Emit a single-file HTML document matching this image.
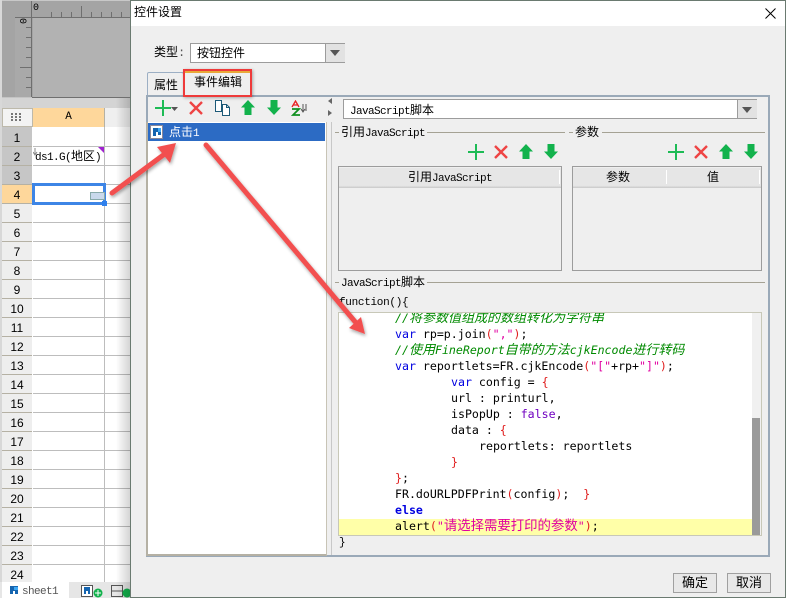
<!DOCTYPE html>
<html><head><meta charset="utf-8">
<style>
html,body{margin:0;padding:0}
body{width:787px;height:598px;position:relative;overflow:hidden;background:#fff;font-family:"Liberation Mono","WenQuanYi Zen Hei","Noto Sans CJK SC",monospace;font-size:12px;color:#000}
div,span.a,svg{position:absolute}
.t{white-space:nowrap;line-height:14px;font-size:12px}
.t i{font-style:normal;font-family:"Liberation Mono",monospace;font-size:11px;letter-spacing:-.6px}
.rn{left:2px;width:30px;height:18px;background:#eee;border-bottom:1px solid #b5b1a4;text-align:center;line-height:20px;font-size:12px;font-family:"Liberation Sans",sans-serif}
.c{left:0;white-space:pre;font-family:"DejaVu Sans Mono",monospace;font-size:11.6px;letter-spacing:-.01px;line-height:16px;height:16px;color:#000}
.c b{font-weight:normal}
.c .k,.c.k{color:#0000e0}.c.g{color:#008a00;font-style:italic}.c .p{color:#e02020}.c .s{color:#e000a0}.c .f{color:#7000c0}
.c u{text-decoration:none;font-family:"Noto Sans CJK SC",sans-serif;font-size:13.4px;line-height:1;letter-spacing:0}
.c.g u{font-size:13px}
.tb{background:#efefef;border:1px solid #9c9c9c;box-sizing:border-box}
.th{background:linear-gradient(#e6e6e6 0,#e6e6e6 88%,#c8c8c8 100%);text-align:center;line-height:20px;height:20px}
.btn{top:573px;width:44px;height:20px;background:#e8e8e8;border:1px solid #a0a0a0;box-sizing:border-box;text-align:center;line-height:19px;font-size:13px}
</style></head><body>
<svg width="0" height="0" style="left:0;top:0"><defs>
<symbol id="plus" viewBox="0 0 16 16"><path d="M8 0v16M0 8h16" stroke="#1dbb55" stroke-width="2"/></symbol>
<symbol id="x" viewBox="0 0 14 14"><path d="M1 1l12 12M13 1L1 13" stroke="#ee4444" stroke-width="2.400"/></symbol>
<symbol id="up" viewBox="0 0 14 15"><path d="M7 0l7 7.500h-3.500V15h-7V7.500H0z" fill="#12b24c"/></symbol>
<symbol id="dn" viewBox="0 0 14 15"><path d="M3.500 0h7v7.500H14L7 15 0 7.500h3.500z" fill="#12b24c"/></symbol>
<filter id="sh" x="-20%" y="-20%" width="140%" height="140%"><feDropShadow dx="1" dy="2" stdDeviation="1.500" flood-color="#000" flood-opacity=".35"/></filter>
</defs></svg>

<!-- Background sheet -->
<div style="left:0;top:0;width:2px;height:598px;background:#d8d8d8"></div>
<div style="left:2px;top:0;width:129px;height:98px;background:#a4a4a4"></div>
<div style="left:15px;top:18px;width:16px;height:79px;background:#a9a9a9"></div>
<div style="left:2px;top:0;width:129px;height:1px;background:#c8c8c8"></div>
<div style="left:33px;top:18px;width:98px;height:79px;background:#b2b2b2"></div>
<div style="left:2px;top:97px;width:129px;height:1px;background:#c4c4c4"></div>
<div style="left:2px;top:98px;width:129px;height:10px;background:#d4d4d4"></div>
<svg style="left:0;top:0" width="131" height="98"><path d="M31.500 1v96M15 17.500h116M32 97.500h99M51.500 12v5M61.500 12v5M71.500 12v5M81.500 6v11M91.500 12v5M101.500 12v5M111.500 12v5M121.500 12v5M26 27.500h5M26 37.500h5M26 47.500h5M26 57.500h5M20 67.500h11M26 77.500h5M26 87.500h5" stroke="#6f6f6f" fill="none"/></svg>
<div class="t" style="left:33px;top:2px;font-size:10px;font-family:'Liberation Mono',monospace">0</div>
<div class="t" style="left:18px;top:14px;font-size:10px;transform:rotate(90deg);font-family:'Liberation Mono',monospace">0</div>

<!-- Grid -->
<div style="left:2px;top:108px;width:31px;height:19px;background:#f3f3f3;border:1px solid #bdb9ab;box-sizing:border-box"></div>
<svg style="left:10px;top:112px" width="12" height="10"><path d="M1 1h2v2H1zM5 1h2v2H5zM9 1h2v2H9zM1 4h2v2H1zM5 4h2v2H5zM9 4h2v2H9zM1 7h2v2H1zM5 7h2v2H5zM9 7h2v2H9z" fill="#777"/></svg>
<div style="left:33px;top:108px;width:71px;height:19px;background:#fed79b;text-align:center;font-size:11px;line-height:19px;font-family:'Liberation Mono',monospace">A</div>
<div style="left:104px;top:108px;width:1px;height:19px;background:#b5b1a4"></div>
<div style="left:105px;top:108px;width:26px;height:19px;background:#efefef"></div>
<div style="left:33px;top:128px;width:98px;height:454px;background:#fff repeating-linear-gradient(to bottom,#fff 0,#fff 18px,#bdbdbd 18px,#bdbdbd 19px)"></div>
<div style="left:104px;top:127px;width:1px;height:455px;background:#bdbdbd"></div>
<div style="left:2px;top:127px;width:30px;height:1px;background:#c6c6c6"></div>
<div class="rn" style="top:128px;background:#c6c6c6">1</div>
<div class="rn" style="top:147px;background:#c6c6c6">2</div>
<div class="rn" style="top:166px;background:#c6c6c6">3</div>
<div class="rn" style="top:185px;background:#fed79b">4</div>
<div class="rn" style="top:204px">5</div><div class="rn" style="top:223px">6</div>
<div class="rn" style="top:242px">7</div><div class="rn" style="top:261px">8</div>
<div class="rn" style="top:280px">9</div><div class="rn" style="top:299px">10</div>
<div class="rn" style="top:318px">11</div><div class="rn" style="top:337px">12</div>
<div class="rn" style="top:356px">13</div><div class="rn" style="top:375px">14</div>
<div class="rn" style="top:394px">15</div><div class="rn" style="top:413px">16</div>
<div class="rn" style="top:432px">17</div><div class="rn" style="top:451px">18</div>
<div class="rn" style="top:470px">19</div><div class="rn" style="top:489px">20</div>
<div class="rn" style="top:508px">21</div><div class="rn" style="top:527px">22</div>
<div class="rn" style="top:546px">23</div><div class="rn" style="top:565px">24</div>
<div class="t" style="left:35px;top:150px;font-size:12px"><i>ds1.G(</i>地区<i>)</i></div>
<svg style="left:33px;top:147px" width="72" height="12"><path d="M2 1v6M0 5l2 3 2-3" stroke="#888" fill="none"/><path d="M65 0h6v6z" fill="#a020d0"/></svg>
<div style="left:32px;top:183px;width:74px;height:22px;box-sizing:border-box;border:3px solid #3d85e6;background:#fff"></div>
<div style="left:90px;top:192px;width:15px;height:8px;box-sizing:border-box;background:#c9d9ec;border:1px solid #8aa"></div>
<div style="left:102px;top:201px;width:5px;height:5px;background:#2f80ed"></div>

<!-- Bottom sheet bar -->
<div style="left:0;top:582px;width:131px;height:16px;background:#e6e6e6"></div>
<div style="left:2px;top:582px;width:67px;height:16px;background:#fff"></div>
<svg style="left:10px;top:586px" width="9" height="9"><path d="M0 0h8v8H5V5H3v3H0z" fill="#1565b0"/><path d="M4 1h4v3H4z" fill="#3fa9f5"/></svg>
<div class="t" style="left:22px;top:584px;color:#555"><i>sheet1</i></div>
<svg style="left:81px;top:585px" width="50" height="13"><rect x=".5" y=".5" width="11" height="11" fill="#fff" stroke="#555"/><path d="M3 2h6v7H7V6H5v3H3z" fill="#1565b0"/><circle cx="17" cy="8" r="4.500" fill="#12b24c"/><path d="M17 5v6M14 8h6" stroke="#fff"/><rect x="30.500" y=".5" width="11" height="11" fill="none" stroke="#555"/><path d="M30 6h12" stroke="#555"/><circle cx="46" cy="8" r="4.500" fill="#12b24c"/></svg>
<div style="left:116px;top:98px;width:15px;height:500px;background:linear-gradient(to right,rgba(0,0,0,0),rgba(0,0,0,.18))"></div>

<!-- Dialog -->
<div style="left:130px;top:0;width:656px;height:598px;background:#efefef;border:1px solid #6a7a70;box-sizing:border-box"></div>
<div style="left:131px;top:1px;width:654px;height:25px;background:#fff"></div>
<div class="t" style="left:134px;top:6px;font-size:12px">控件设置</div>
<svg style="left:765px;top:8px" width="11" height="11"><path d="M.5.500l10 10M10.500.500l-10 10" stroke="#000"/></svg>

<div class="t" style="left:154px;top:46px">类型<span style="color:#555">:</span></div>
<div style="left:190px;top:43px;width:155px;height:20px;background:#fff;border:1px solid #9c9c9c;box-sizing:border-box"></div>
<div style="left:325px;top:44px;width:19px;height:18px;background:#e2e2e2;border-left:1px solid #9c9c9c"></div>
<svg style="left:330px;top:50px" width="10" height="6"><path d="M0 0h10L5 6z" fill="#555"/></svg>
<div class="t" style="left:197px;top:47px">按钮控件</div>

<!-- Tabs -->
<div style="left:147px;top:72px;width:37px;height:24px;background:#efefef;border:1px solid #9cafc4;border-bottom:0;border-radius:2px 2px 0 0;box-sizing:border-box"></div>
<div class="t" style="left:154px;top:79px">属性</div>

<!-- Main panel -->
<div style="left:146px;top:95px;width:624px;height:462px;box-sizing:border-box;border:2px solid #9aa9b8;background:#efefef"></div>
<div style="left:184px;top:71px;width:66px;height:25px;background:#efefef"></div>
<div style="left:185px;top:71px;width:65px;height:2px;background:#e8a93a"></div>
<div class="t" style="left:194px;top:76px">事件编辑</div>
<div style="left:183px;top:69px;width:69px;height:28px;box-sizing:border-box;border:2px solid #ee3a3a;box-shadow:1px 1px 3px rgba(0,0,0,.3)"></div>

<!-- Left toolbar -->
<svg style="left:155px;top:100px" width="16" height="16"><use href="#plus"/></svg>
<svg style="left:171px;top:107px" width="7" height="4"><path d="M0 0h7L3.500 4z" fill="#555"/></svg>
<svg style="left:189px;top:101px" width="14" height="14"><use href="#x"/></svg>
<svg style="left:214px;top:100px" width="17" height="16"><path d="M1.500.500h6v11h-6zM8.500 4.500h4l3 3v8h-7z" fill="#fff" stroke="#1d5a78"/><path d="M12.500 4.500v3h3" fill="none" stroke="#1d5a78"/></svg>
<svg style="left:241px;top:100px" width="14" height="15"><use href="#up"/></svg>
<svg style="left:267px;top:100px" width="14" height="15"><use href="#dn"/></svg>
<svg style="left:291px;top:100px" width="18" height="16"><path d="M1 7L4.500 1 8 7M2.500 5h4" fill="none" stroke="#e82020" stroke-width="1.300"/><path d="M1 9h7L2 15h7" fill="none" stroke="#109020" stroke-width="1.800"/><path d="M12 4v7M10 9l2 3 2-3M15 4v7" fill="none" stroke="#555"/></svg>

<!-- Left list -->
<div style="left:146px;top:122px;width:181px;height:434px;background:#fff;border-left:2px solid #b5b1a4;border-right:1px solid #c8c4b6;border-bottom:2px solid #b5b1a4;box-sizing:border-box"></div>
<div style="left:148px;top:123px;width:177px;height:18px;background:#2c6bc4"></div>
<svg style="left:150px;top:125px" width="14" height="15"><path d="M.5.500h12v13H.500z" fill="#fff" stroke="#889"/><path d="M3 3h8v7H8V7H6v4H3z" fill="#1565b0"/><path d="M8 3h3v4H8z" fill="#3fa9f5"/></svg>
<div class="t" style="left:169px;top:126px;color:#fff">点击<i>1</i></div>

<!-- Splitter -->
<svg style="left:327px;top:95px" width="6" height="25"><path d="M5 3v6L1 6zM1 15v6l4-3z" fill="#666"/></svg>
<div style="left:331px;top:122px;width:1px;height:433px;background:#c8c8c8"></div>

<!-- Right top combo -->
<div style="left:343px;top:99px;width:414px;height:20px;background:#fff;border:1px solid #9c9c9c;box-sizing:border-box"></div>
<div style="left:737px;top:100px;width:19px;height:18px;background:#e2e2e2;border-left:1px solid #9c9c9c"></div>
<svg style="left:742px;top:107px" width="10" height="6"><path d="M0 0h10L5 6z" fill="#555"/></svg>
<div class="t" style="left:350px;top:104px"><i>JavaScript</i>脚本</div>

<!-- Legends -->
<div style="left:335px;top:132px;width:4px;height:1px;background:#a5a294"></div>
<div style="left:427px;top:132px;width:138px;height:1px;background:#a5a294"></div>
<div style="left:569px;top:132px;width:4px;height:1px;background:#a5a294"></div>
<div style="left:602px;top:132px;width:163px;height:1px;background:#a5a294"></div>
<div class="t" style="left:341px;top:126px">引用<i>JavaScript</i></div>
<div class="t" style="left:575px;top:126px">参数</div>

<svg style="left:468px;top:144px" width="16" height="16"><use href="#plus"/></svg>
<svg style="left:494px;top:145px" width="14" height="14"><use href="#x"/></svg>
<svg style="left:519px;top:144px" width="14" height="15"><use href="#up"/></svg>
<svg style="left:544px;top:144px" width="14" height="15"><use href="#dn"/></svg>
<svg style="left:668px;top:144px" width="16" height="16"><use href="#plus"/></svg>
<svg style="left:694px;top:145px" width="14" height="14"><use href="#x"/></svg>
<svg style="left:719px;top:144px" width="14" height="15"><use href="#up"/></svg>
<svg style="left:744px;top:144px" width="14" height="15"><use href="#dn"/></svg>

<!-- Tables -->
<div class="tb" style="left:338px;top:166px;width:224px;height:105px"></div>
<div class="th t" style="left:339px;top:168px;width:222px;line-height:20px">引用<i>JavaScript</i></div>
<div style="left:559px;top:170px;width:1px;height:14px;background:#fff"></div>
<div class="tb" style="left:572px;top:166px;width:190px;height:105px"></div>
<div class="th" style="left:573px;top:168px;width:188px"></div>
<div class="t" style="left:606px;top:171px">参数</div>
<div class="t" style="left:707px;top:171px">值</div>
<div style="left:666px;top:170px;width:1px;height:14px;background:#fff"></div>
<div style="left:759px;top:170px;width:1px;height:14px;background:#fff"></div>

<!-- Script -->
<div style="left:335px;top:282px;width:4px;height:1px;background:#a5a294"></div>
<div style="left:427px;top:282px;width:338px;height:1px;background:#a5a294"></div>
<div class="t" style="left:341px;top:276px"><i>JavaScript</i>脚本</div>
<div class="t" style="left:339px;top:295px"><i style="letter-spacing:-.3px">function(){</i></div>
<div class="t" style="left:339px;top:535px"><i>}</i></div>

<div style="left:338px;top:312px;width:424px;height:224px;background:#fff;border:1px solid #c8c8b8;box-sizing:border-box;overflow:hidden">
  <div style="left:0;top:206px;width:413px;height:16px;background:#ffffa8"></div>
  <div style="left:413px;top:0;width:9px;height:222px;background:#f0f0f0"></div>
  <div style="left:413px;top:105px;width:8px;height:117px;background:#9a9a9a"></div>
  <div class="c g" style="left:56px;top:-3px">//<u>将参数值组成的数组转化为字符串</u></div>
  <div class="c" style="left:56px;top:13px"><b class="k">var</b> rp=p.join<b class="p">(</b><b class="s">","</b><b class="p">)</b>;</div>
  <div class="c g" style="left:56px;top:29px">//<u>使用</u>FineReport<u>自带的方法</u>cjkEncode<u>进行转码</u></div>
  <div class="c" style="left:56px;top:45px"><b class="k">var</b> reportlets=FR.cjkEncode<b class="p">(</b><b class="s">"["</b>+rp+<b class="s">"]"</b><b class="p">)</b>;</div>
  <div class="c" style="left:112px;top:61px"><b class="k">var</b> config = <b class="p">{</b></div>
  <div class="c" style="left:112px;top:77px">url : printurl,</div>
  <div class="c" style="left:112px;top:93px">isPopUp : <b class="f">false</b>,</div>
  <div class="c" style="left:112px;top:109px">data : <b class="p">{</b></div>
  <div class="c" style="left:140px;top:125px">reportlets: reportlets</div>
  <div class="c" style="left:112px;top:141px"><b class="p">}</b></div>
  <div class="c" style="left:56px;top:157px"><b class="p">}</b>;</div>
  <div class="c" style="left:56px;top:173px">FR.doURLPDFPrint<b class="p">(</b>config<b class="p">)</b>;  <b class="p">}</b></div>
  <div class="c k" style="left:56px;top:189px;font-weight:bold">else</div>
  <div class="c" style="left:56px;top:205px">alert<b class="p">(</b><b class="s">"<u>请选择需要打印的参数</u>"</b><b class="p">)</b>;</div>
</div>

<!-- Buttons -->
<div class="btn" style="left:673px">确定</div>
<div class="btn" style="left:727px">取消</div>

<!-- Arrows -->
<svg style="left:0;top:0" width="787" height="598">
<g filter="url(#sh)">
<path d="M112 193L166 153" fill="none" stroke="#f24f4f" stroke-width="5" stroke-linecap="round"/>
<path d="M176 143L157 147 170 163z" fill="#f24f4f"/>
</g>
<g filter="url(#sh)">
<path d="M206 145L357 324" fill="none" stroke="#f24f4f" stroke-width="5" stroke-linecap="round"/>
<path d="M365 334L349 328 361 317z" fill="#f24f4f"/>
</g>
</svg>
</body></html>
